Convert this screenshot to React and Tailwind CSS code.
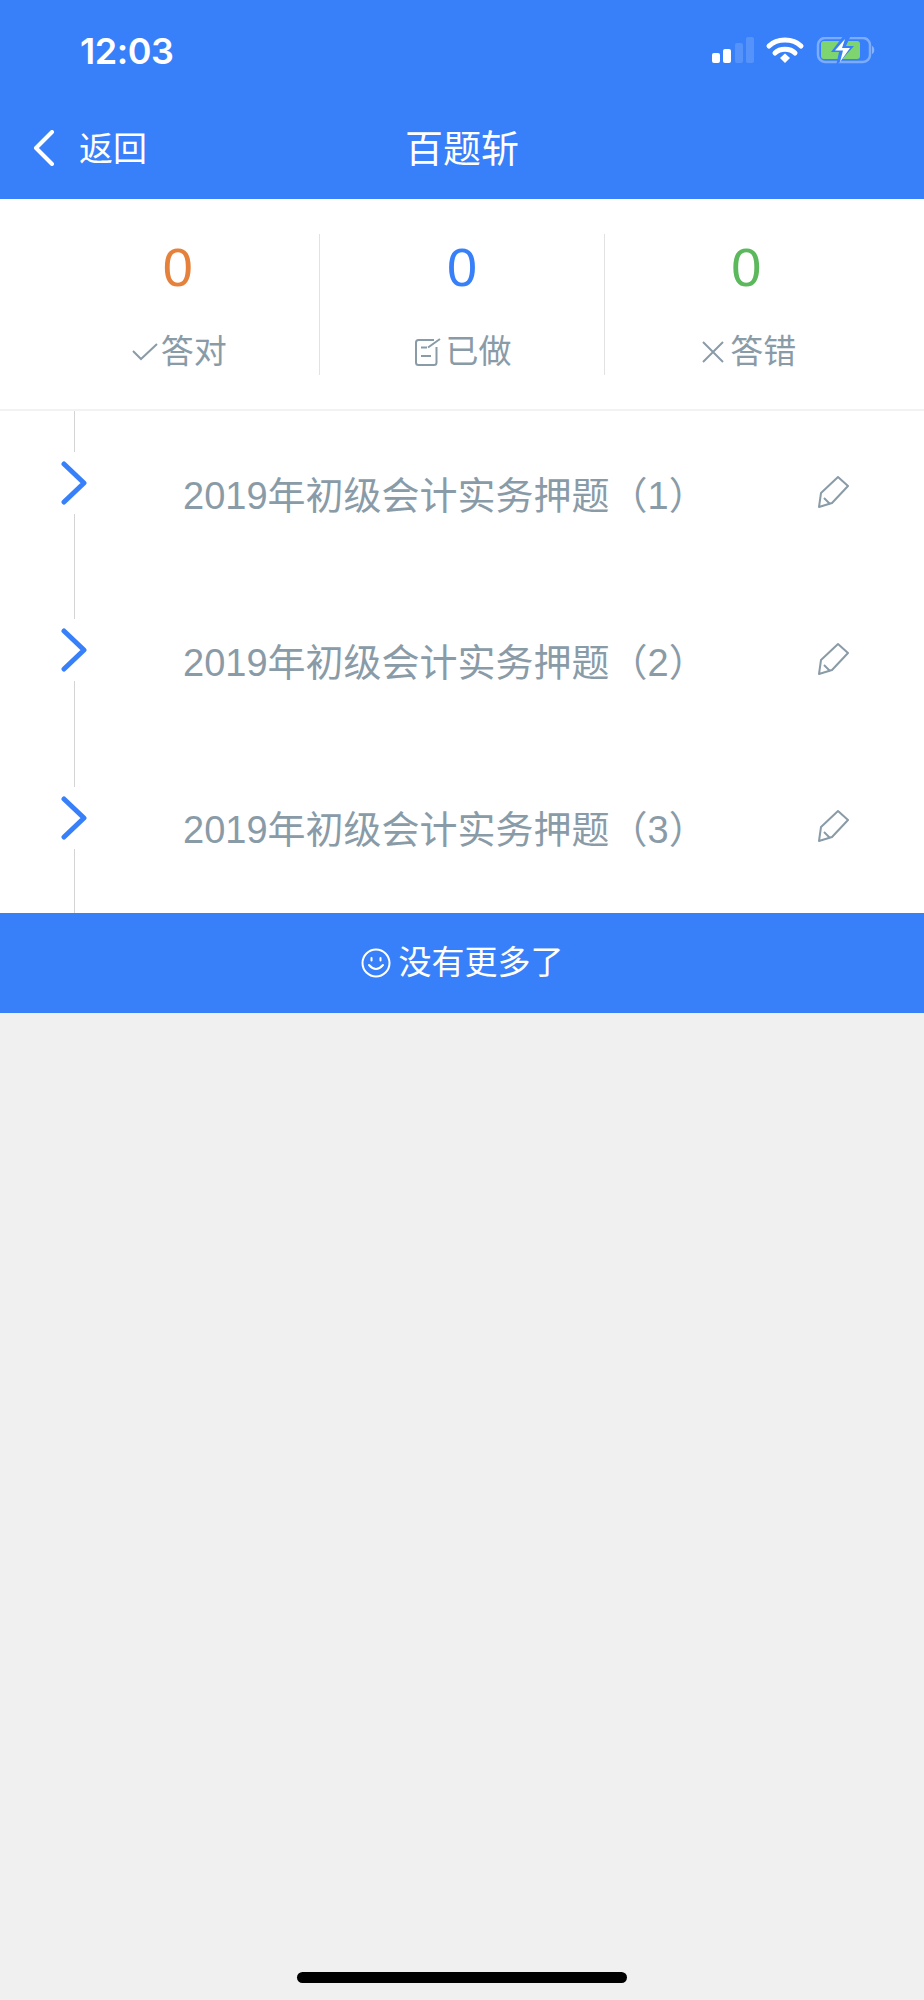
import React from 'react';

const cjk = "font-['Liberation_Sans','Noto_Sans_CJK_SC',sans-serif]";

const StatusIcons = () => (
  <svg width="165" height="28" viewBox="0 0 165 28" className="shrink-0">
    {/* signal */}
    <rect x="0" y="16" width="8" height="10" rx="2" fill="#fff" />
    <rect x="11" y="12" width="8" height="14" rx="2" fill="#fff" />
    <rect x="23" y="6" width="8" height="20" rx="2" fill="#fff" fillOpacity="0.15" />
    <rect x="34" y="0" width="8" height="26" rx="2" fill="#fff" fillOpacity="0.15" />
    {/* wifi */}
    <path d="M57 9 C65 1 81 1 89 9" fill="none" stroke="#fff" strokeWidth="5" strokeLinecap="round" />
    <path d="M63 16 C68 11 78 11 83 16" fill="none" stroke="#fff" strokeWidth="5" strokeLinecap="round" />
    <path d="M68 21 L73 16.5 L78 21 L73 26 Z" fill="#fff" />
    {/* battery */}
    <rect x="106" y="1" width="52" height="24" rx="7" fill="none" stroke="#fff" strokeOpacity="0.35" strokeWidth="2.5" />
    <path d="M160 9 C163 10 163 16 160 17 Z" fill="#fff" fillOpacity="0.4" />
    <rect x="109" y="4" width="39" height="18" rx="3" fill="#7ed56f" />
    <path d="M132 -2 L119 15 L127 15 L124 29 L142 9 L134 9 L139 -2 Z" fill="#3880f9" />
    <path d="M133 2 L123 13.5 L131 13.5 L128 25 L138 11 L130 11 Z" fill="#fff" />
  </svg>
);

const CheckIcon = () => (
  <svg width="26" height="18" viewBox="0 0 26 18" fill="none" stroke="#8a9ba8" strokeWidth="2" className="shrink-0">
    <path d="M1 8 L9 16 L25 1" />
  </svg>
);

const EditIcon = () => (
  <svg width="26" height="28" viewBox="0 0 26 28" fill="none" stroke="#8a9ba8" strokeWidth="2" className="shrink-0">
    <path d="M19 2 H3.5 Q1 2 1 4.5 V24.500 Q1 27 3.500 27 H19 Q21.500 27 21.500 24.500 V9" />
    <path d="M6 9.500 H12 M6 18 H16 M13 9.500 L25 1" />
  </svg>
);

const CrossIcon = () => (
  <svg width="22" height="22" viewBox="0 0 22 22" fill="none" stroke="#8a9ba8" strokeWidth="2" className="shrink-0">
    <path d="M1 1 L21 21 M21 1 L1 21" />
  </svg>
);

const PencilIcon = () => (
  <svg width="32" height="34" viewBox="0 0 32 34" fill="none" stroke="#8a9ba8" strokeWidth="2" strokeLinejoin="round" className="-mt-[6px]">
    <path d="M1 32 L3 18 L20 2 L30 11 L14 28 Z" />
    <path d="M6 23 L12 29" />
  </svg>
);

const stats = [
  { value: 0, color: 'text-[#e5813b]', label: '答对', icon: <CheckIcon />, row: 'pl-[3px] gap-[3px]' },
  { value: 0, color: 'text-[#3880f9]', label: '已做', icon: <EditIcon />, row: 'pl-[3px] gap-[4px]' },
  { value: 0, color: 'text-[#5cb85c]', label: '答错', icon: <CrossIcon />, row: 'pl-[6px] gap-[6px]' },
];

const papers = ['2019年初级会计实务押题（1）', '2019年初级会计实务押题（2）', '2019年初级会计实务押题（3）'];

export default function App() {
  return (
    <div className={`min-h-[2000px] flex flex-col bg-[#f0f0f0] ${cjk}`}>
      {/* Header */}
      <div className="h-[199px] bg-[#3880f9] text-white flex flex-col shrink-0">
        <div className="h-[102px] flex items-center justify-between pl-[80px] pr-[47px]">
          <span className="text-[36px] font-semibold font-['Inter',sans-serif] tracking-[-0.5px]">12:03</span>
          <StatusIcons />
        </div>
        <div className="relative h-[92px] flex items-center justify-center">
          <div className="absolute left-[33px] top-0 bottom-0 flex items-center gap-[24px]">
            <svg width="22" height="36" viewBox="0 0 22 36" fill="none" stroke="#fff" strokeWidth="4" strokeLinecap="round" strokeLinejoin="round">
              <path d="M19 2 L3 18 L19 34" />
            </svg>
            <span className="text-[34px] mt-[2px]">返回</span>
          </div>
          <span className="text-[38px] mt-[3px]">百题斩</span>
        </div>
      </div>

      {/* Stats */}
      <div className="h-[212px] bg-white border-b-2 border-[#f2f2f2] px-[36px] pt-[35px] flex items-start shrink-0">
        {stats.map((s, i) => (
          <div
            key={s.label}
            className={`flex-1 h-[141px] flex flex-col items-center ${i > 0 ? 'border-l border-[#e2e2e2]' : ''}`}
          >
            <span className={`mt-[2px] text-[54px] leading-[62px] ${s.color}`}>{s.value}</span>
            <div className={`mt-[32px] flex items-center text-[33px] leading-[44px] text-[#8a9ba8] ${s.row}`}>
              {s.icon}
              <span>{s.label}</span>
            </div>
          </div>
        ))}
      </div>

      {/* Timeline list */}
      <div className="bg-white flex flex-col shrink-0">
        {papers.map(title => (
          <div key={title} className="h-[167.33px] flex items-center pr-[74px]">
            <div className="w-[60px] ml-[44px] h-full flex flex-col items-center shrink-0">
              <div className="w-px h-[41px] bg-[#d4d4d4]" />
              <svg width="28" height="44" viewBox="0 0 28 44" fill="none" stroke="#3880f9" strokeWidth="5" strokeLinecap="round" strokeLinejoin="round" className="mt-[9px] mb-[9px] shrink-0">
                <path d="M4 3 L24 22 L4 41" />
              </svg>
              <div className="w-px flex-1 bg-[#d4d4d4]" />
            </div>
            <span className="ml-[79px] mt-[3px] flex-1 text-[38px] text-[#8a9ba8] whitespace-nowrap">{title}</span>
            <PencilIcon />
          </div>
        ))}
      </div>

      {/* No more */}
      <div className="h-[100px] bg-[#3880f9] text-white flex items-center justify-center gap-[8px] shrink-0">
        <svg width="30" height="30" viewBox="0 0 30 30" fill="none" stroke="#fff" strokeWidth="2" strokeLinecap="round">
          <circle cx="15" cy="15" r="13.5" />
          <path d="M8 17 Q15 25 22 17" />
          <path d="M10.5 10 V12.5 M19.5 10 V12.5" />
        </svg>
        <span className="text-[33px]">没有更多了</span>
      </div>

      {/* Home indicator */}
      <div className="flex-1 flex flex-col items-center justify-end pb-[17px]">
        <div className="w-[330px] h-[11px] rounded-full bg-black" />
      </div>
    </div>
  );
}
